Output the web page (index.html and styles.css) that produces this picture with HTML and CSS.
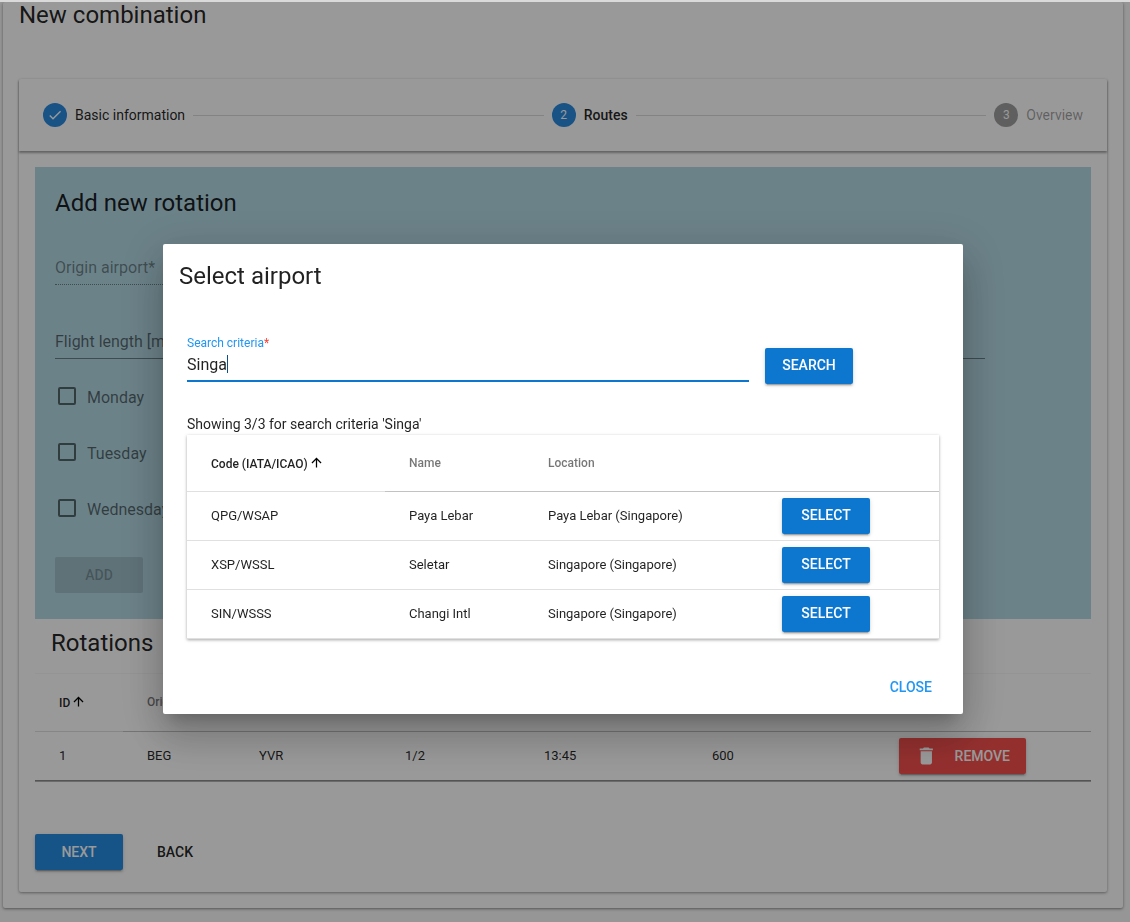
FILE: index.html
```html
<!DOCTYPE html>
<html>
<head>
    <meta charset="UTF-8">
    <title>New combination</title>
    <link rel="stylesheet" href="styles.css">
</head>
<body>
    <div class="top-strip"></div>
    <div class="page-card">
        <h1 class="page-title">New combination</h1>
        <div class="form-card">
            <div class="stepper">
                <div class="step">
                    <span class="step-icon">
                        <svg viewBox="0 0 24 24" width="16" height="16"><path fill="#fff" d="M9 16.17L4.83 12l-1.42 1.41L9 19 21 7l-1.41-1.41z"/></svg>
                    </span>
                    <span class="step-label">Basic information</span>
                </div>
                <div class="step-line"></div>
                <div class="step">
                    <span class="step-icon">2</span>
                    <span class="step-label active">Routes</span>
                </div>
                <div class="step-line"></div>
                <div class="step">
                    <span class="step-icon idle">3</span>
                    <span class="step-label muted">Overview</span>
                </div>
            </div>

            <div class="step-body">
                <div class="rotation-panel">
                    <h2 class="section-title">Add new rotation</h2>
                    <div class="field field-dotted">Origin airport*</div>
                    <div class="field field-solid">Flight length [m]</div>
                    <label class="day"><span class="checkbox"></span>Monday</label>
                    <label class="day"><span class="checkbox"></span>Tuesday</label>
                    <label class="day"><span class="checkbox"></span>Wednesday</label>
                    <button class="btn btn-disabled add-btn">ADD</button>
                </div>

                <h2 class="section-title rotations-title">Rotations</h2>
                <table class="data-table rotations">
                    <thead>
                        <tr>
                            <th class="sorted">ID<svg class="sort-arrow" viewBox="0 0 24 24"><path d="M4 12l1.41 1.41L11 7.83V20h2V7.83l5.58 5.59L20 12l-8-8-8 8z"/></svg></th>
                            <th>Origin</th>
                            <th></th>
                            <th></th>
                            <th></th>
                            <th></th>
                            <th></th>
                        </tr>
                    </thead>
                    <tbody>
                        <tr>
                            <td>1</td>
                            <td>BEG</td>
                            <td>YVR</td>
                            <td>1/2</td>
                            <td>13:45</td>
                            <td>600</td>
                            <td>
                                <button class="btn btn-remove">
                                    <svg viewBox="0 0 24 24" width="24" height="24"><path fill="currentColor" d="M6 19c0 1.1.9 2 2 2h8c1.1 0 2-.9 2-2V7H6v12zM19 4h-3.5l-1-1h-5l-1 1H5v2h14V4z"/></svg>
                                    REMOVE
                                </button>
                            </td>
                        </tr>
                    </tbody>
                </table>

                <div class="wizard-actions">
                    <button class="btn btn-primary btn-next">NEXT</button>
                    <button class="btn btn-flat">BACK</button>
                </div>
            </div>
        </div>
    </div>

    <div class="overlay">
        <div class="dialog">
            <h2 class="dialog-title">Select airport</h2>
            <div class="search-row">
                <div class="search-field">
                    <div class="search-label">Search criteria<span class="required">*</span></div>
                    <div class="search-value">Singa<span class="caret"></span></div>
                </div>
                <button class="btn btn-primary">SEARCH</button>
            </div>
            <div class="result-count">Showing 3/3 for search criteria 'Singa'</div>
            <table class="data-table airports">
                <thead>
                    <tr>
                        <th class="sorted">Code (IATA/ICAO)<svg class="sort-arrow" viewBox="0 0 24 24"><path d="M4 12l1.41 1.41L11 7.83V20h2V7.83l5.58 5.59L20 12l-8-8-8 8z"/></svg></th>
                        <th>Name</th>
                        <th>Location</th>
                        <th></th>
                    </tr>
                </thead>
                <tbody>
                    <tr>
                        <td>QPG/WSAP</td>
                        <td>Paya Lebar</td>
                        <td>Paya Lebar (Singapore)</td>
                        <td><button class="btn btn-primary">SELECT</button></td>
                    </tr>
                    <tr>
                        <td>XSP/WSSL</td>
                        <td>Seletar</td>
                        <td>Singapore (Singapore)</td>
                        <td><button class="btn btn-primary">SELECT</button></td>
                    </tr>
                    <tr>
                        <td>SIN/WSSS</td>
                        <td>Changi Intl</td>
                        <td>Singapore (Singapore)</td>
                        <td><button class="btn btn-primary">SELECT</button></td>
                    </tr>
                </tbody>
            </table>
            <div class="dialog-actions">
                <button class="btn btn-close">CLOSE</button>
            </div>
        </div>
    </div>
</body>
</html>
```

FILE: styles.css
```css
html, body {
    height: 100%;
    overflow: hidden;
}

body {
    margin: 0;
    font-family: Roboto, 'Liberation Sans', sans-serif;
    font-size: 14px;
    color: rgba(0, 0, 0, 0.87);
    background-color: #fafafa;
}

h1, h2 {
    margin: 0;
    font-size: 24px;
    font-weight: 400;
    line-height: 32px;
}

.top-strip {
    height: 2px;
    background-color: #dadada;
    position: relative;
    z-index: 20;
}

.page-card {
    margin: 0 7px 0 3px;
    padding: 0 16px 16px;
    height: 906px;
    box-sizing: border-box;
    background-color: #fff;
    border-radius: 2px;
    box-shadow: 0 1px 3px rgba(0, 0, 0, 0.45);
}

.page-title {
    line-height: 26px;
    margin-bottom: 51px;
}

.form-card {
    height: 813px;
    background-color: #fff;
    border-radius: 2px;
    box-shadow: 0 1px 3px rgba(0, 0, 0, 0.4);
}

/* stepper */

.stepper {
    display: flex;
    align-items: center;
    height: 72px;
    padding: 0 24px;
    box-shadow: 0 2px 2px rgba(0, 0, 0, 0.35);
}

.step {
    display: flex;
    align-items: center;
}

.step-icon {
    display: flex;
    align-items: center;
    justify-content: center;
    width: 24px;
    height: 24px;
    margin-right: 8px;
    border-radius: 50%;
    background-color: #2a8ae0;
    color: #fff;
    font-size: 12px;
}

.step-icon.idle {
    background-color: #9e9e9e;
}

.step-label {
    font-size: 14px;
}

.step-label.active {
    font-weight: 500;
}

.step-label.muted {
    color: rgba(0, 0, 0, 0.38);
}

.step-line {
    flex: 1;
    height: 1px;
    margin: 0 8px;
    background-color: rgba(0, 0, 0, 0.14);
}

/* rotation form */

.step-body {
    padding: 16px;
}

.rotation-panel {
    height: 452px;
    box-sizing: border-box;
    padding: 20px;
    background-color: #b4d9e4;
}

.section-title {
    color: rgba(0, 0, 0, 0.87);
}

.field {
    box-sizing: border-box;
    height: 29px;
    line-height: 24px;
    font-size: 16px;
    color: rgba(0, 0, 0, 0.42);
}

.field-dotted {
    margin-top: 37px;
    width: 300px;
    border-bottom: 1px dotted rgba(0, 0, 0, 0.42);
}

.field-solid {
    margin-top: 45px;
    width: 930px;
    color: rgba(0, 0, 0, 0.54);
    border-bottom: 1px solid rgba(0, 0, 0, 0.42);
}

.day {
    display: flex;
    align-items: center;
    height: 24px;
    margin-top: 32px;
    font-size: 16px;
    color: rgba(0, 0, 0, 0.54);
}

.field-solid + .day {
    margin-top: 26px;
}

.checkbox {
    box-sizing: border-box;
    width: 18px;
    height: 18px;
    margin: -3px 11px 0 3px;
    border: 2px solid rgba(0, 0, 0, 0.54);
    border-radius: 2px;
}

/* buttons */

.btn {
    display: inline-block;
    min-width: 88px;
    height: 36px;
    padding: 0 16px;
    border: 0;
    border-radius: 2px;
    font-family: inherit;
    font-size: 14px;
    font-weight: 500;
    background: transparent;
    color: rgba(0, 0, 0, 0.87);
}

.btn-primary {
    background-color: #0d77cf;
    color: #fff;
    box-shadow: 0 3px 1px -2px rgba(0, 0, 0, 0.2), 0 2px 2px 0 rgba(0, 0, 0, 0.14), 0 1px 5px 0 rgba(0, 0, 0, 0.12);
}

.btn-next {
    background-color: #258ae1;
}

.btn-disabled {
    background-color: rgba(0, 0, 0, 0.12);
    color: rgba(0, 0, 0, 0.26);
}

.add-btn {
    display: block;
    margin-top: 36px;
}

.btn-remove {
    display: flex;
    align-items: center;
    width: 127px;
    padding: 0 16px;
    background-color: #f5504e;
    color: #fff;
    box-shadow: 0 3px 1px -2px rgba(0, 0, 0, 0.2), 0 2px 2px 0 rgba(0, 0, 0, 0.14), 0 1px 5px 0 rgba(0, 0, 0, 0.12);
}

.btn-remove svg {
    margin-right: 17px;
}

.btn-close {
    padding-right: 15px;
    color: #2196f3;
}

/* tables */

.data-table {
    width: 100%;
    border-collapse: collapse;
    table-layout: fixed;
    background-color: #fff;
}

.data-table th {
    text-align: left;
    font-size: 12px;
    font-weight: 500;
    padding: 0 0 0 24px;
    color: rgba(0, 0, 0, 0.54);
    border-bottom: 1px solid rgba(0, 0, 0, 0.24);
}

.data-table th.sorted {
    color: rgba(0, 0, 0, 0.87);
    border-bottom-color: rgba(0, 0, 0, 0.12);
}

.data-table td {
    height: 48px;
    padding: 0 0 0 24px;
    font-size: 13px;
    border-bottom: 1px solid rgba(0, 0, 0, 0.12);
}

.sort-arrow {
    width: 15px;
    height: 15px;
    margin-left: 1px;
    vertical-align: -2px;
}

.rotations-title {
    margin: 8px 0 15px 16px;
}

.rotations {
    width: 1056px;
    box-shadow: 0 -1px 0 rgba(0, 0, 0, 0.03), 0 1px 0 rgba(0, 0, 0, 0.3);
}

.rotations thead tr {
    height: 57px;
}

.rotations th:nth-child(1) { width: 64px; }
.rotations th:nth-child(2) { width: 88px; }
.rotations th:nth-child(3) { width: 122px; }
.rotations th:nth-child(4) { width: 115px; }
.rotations th:nth-child(5) { width: 144px; }
.rotations th:nth-child(6) { width: 163px; }

.rotations tbody tr:last-child td {
    border-bottom: 1px solid rgba(0, 0, 0, 0.45);
}

.wizard-actions {
    display: flex;
    margin-top: 53px;
}

.btn-flat {
    margin-left: 8px;
}

/* dialog */

.overlay {
    position: fixed;
    top: 2px;
    left: 0;
    right: 0;
    bottom: 0;
    z-index: 10;
    padding-top: 242px;
    background-color: rgba(0, 0, 0, 0.4);
}

.dialog {
    box-sizing: border-box;
    width: 800px;
    height: 470px;
    margin-left: 163px;
    padding: 16px;
    border-radius: 2px;
    background-color: #fff;
    box-shadow: 0 11px 15px -7px rgba(0, 0, 0, 0.2), 0 24px 38px 3px rgba(0, 0, 0, 0.14), 0 9px 46px 8px rgba(0, 0, 0, 0.12);
}

.search-row {
    display: flex;
    align-items: flex-start;
    margin: 44px 0 0 8px;
}

.search-field {
    width: 562px;
    height: 46px;
    margin-right: 16px;
    border-bottom: 2px solid #0d77cf;
    box-sizing: border-box;
}

.search-row .btn {
    margin-top: 12px;
    padding-bottom: 2px;
}

.search-label {
    font-size: 12px;
    line-height: 14px;
    color: #2196f3;
}

.required {
    color: #f44336;
}

.search-value {
    margin-top: 3px;
    font-size: 16px;
    line-height: 24px;
}

.caret {
    display: inline-block;
    width: 1px;
    height: 18px;
    vertical-align: -3px;
    background-color: #0d4f8a;
}

.result-count {
    margin: 30px 0 1px 8px;
    font-size: 14px;
    line-height: 20px;
}

.airports {
    width: 752px;
    margin-left: 8px;
    box-shadow: 0 1px 3px rgba(0, 0, 0, 0.35);
}

.airports thead tr {
    height: 56px;
}

.airports th:nth-child(1) { width: 174px; }
.airports th:nth-child(2) { width: 115px; }
.airports th:nth-child(3) { width: 210px; }

.airports .btn {
    padding-bottom: 2px;
}

.dialog-actions {
    display: flex;
    justify-content: flex-end;
    margin-top: 30px;
}

.dialog-actions .btn {
    min-width: 0;
}
```
